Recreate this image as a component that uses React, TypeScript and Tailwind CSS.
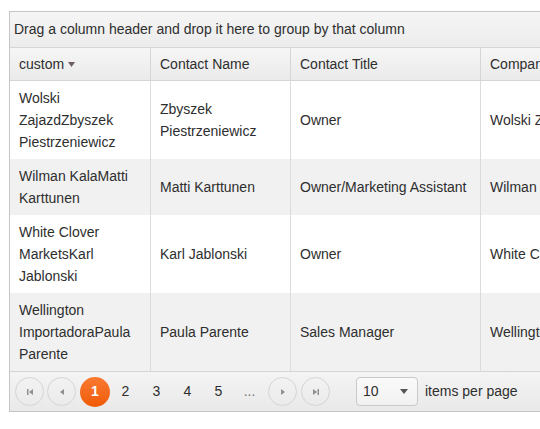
import React from "react";

const rows = [
  ["Wolski ZajazdZbyszek Piestrzeniewicz", "Zbyszek Piestrzeniewicz", "Owner", "Wolski Zajazd"],
  ["Wilman KalaMatti Karttunen", "Matti Karttunen", "Owner/Marketing Assistant", "Wilman Kala"],
  ["White Clover MarketsKarl Jablonski", "Karl Jablonski", "Owner", "White Clover Markets"],
  ["Wellington ImportadoraPaula Parente", "Paula Parente", "Sales Manager", "Wellington Importadora"],
];

function NavBtn({ kind }: { kind: "first" | "prev" | "next" | "last" }) {
  return (
    <div className="w-[29px] h-[29px] rounded-full border border-[#d4d4d4] flex items-center justify-center shrink-0">
      <svg width="10" height="10" viewBox="0 0 10 10">
        {kind === "first" && (
          <g fill="#8f8f8f">
            <rect x="2" y="2" width="1.5" height="6" />
            <polygon points="8,2 8,8 4,5" />
          </g>
        )}
        {kind === "prev" && <polygon points="7,2 7,8 3,5" fill="#8f8f8f" />}
        {kind === "next" && <polygon points="3,2 3,8 7,5" fill="#8f8f8f" />}
        {kind === "last" && (
          <g fill="#8f8f8f">
            <polygon points="2,2 2,8 6,5" />
            <rect x="6.5" y="2" width="1.5" height="6" />
          </g>
        )}
      </svg>
    </div>
  );
}

export default function App() {
  return (
    <div
      className="w-[540px] h-[429px] overflow-hidden bg-white text-[14px] text-[#2e2e2e]"
      style={{ fontFamily: '"Liberation Sans", Arial, sans-serif' }}
    >
      <div className="ml-[9px] mt-[11px] w-[640px] border border-[#c5c5c5]">
        {/* group panel */}
        <div className="h-[36px] flex items-center pl-[4px] border-b border-[#d5d5d5] bg-gradient-to-b from-[#f5f5f5] to-[#ececec]">
          Drag a column header and drop it here to group by that column
        </div>
        {/* header */}
        <div className="flex h-[33px] border-b border-[#d5d5d5] bg-gradient-to-b from-[#f6f6f6] to-[#eaeaea]">
          <div className="w-[140px] pl-[9px] flex items-center">
            custom
            <svg width="8" height="6" viewBox="0 0 8 6" className="ml-[4px] mt-[1px]">
              <polygon points="0,0 7,0 3.5,5" fill="#6b5f5f" />
            </svg>
          </div>
          <div className="w-[140px] pl-[9px] flex items-center border-l border-[#d5d5d5]">Contact Name</div>
          <div className="w-[190px] pl-[9px] flex items-center border-l border-[#d5d5d5]">Contact Title</div>
          <div className="w-[168px] pl-[9px] flex items-center border-l border-[#d5d5d5] whitespace-nowrap">Company Name</div>
        </div>
        {/* rows */}
        {rows.map((r, i) => (
          <div key={i} className={`flex leading-[22px] ${i % 2 === 1 ? "bg-[#f1f1f1]" : "bg-white"}`}>
            <div className="w-[140px] px-[9px] py-[6px] flex items-center">{r[0]}</div>
            <div className="w-[140px] px-[9px] py-[6px] flex items-center border-l border-[#dbdbdb]">{r[1]}</div>
            <div className="w-[190px] px-[9px] py-[6px] flex items-center border-l border-[#dbdbdb]">{r[2]}</div>
            <div className="w-[168px] px-[9px] py-[6px] flex items-center border-l border-[#dbdbdb] whitespace-nowrap">{r[3]}</div>
          </div>
        ))}
        {/* pager */}
        <div className="h-[40px] border-t border-[#d5d5d5] bg-gradient-to-b from-[#f4f4f4] to-[#e9e9e9] flex items-center pl-[5px]">
          <NavBtn kind="first" />
          <div className="ml-[3px]">
            <NavBtn kind="prev" />
          </div>
          <div className="ml-[4px] w-[30px] h-[30px] rounded-full bg-gradient-to-b from-[#f87a30] to-[#f05a00] text-white font-bold flex items-center justify-center">
            1
          </div>
          {["2", "3", "4", "5", "..."].map((n) => (
            <div key={n} className={`w-[31px] text-center ${n === "..." ? "text-[#777]" : ""}`}>
              {n}
            </div>
          ))}
          <div className="ml-[3px]">
            <NavBtn kind="next" />
          </div>
          <div className="ml-[4px]">
            <NavBtn kind="last" />
          </div>
          <div className="ml-[26px] w-[62px] h-[29px] rounded-[4px] border border-[#c9c9c9] bg-gradient-to-b from-[#fafafa] to-[#f1f1f1] flex items-center justify-between pl-[6px] pr-[8px]">
            <span>10</span>
            <svg width="9" height="6" viewBox="0 0 9 6">
              <polygon points="0,0 8,0 4,5" fill="#555" />
            </svg>
          </div>
          <div className="ml-[7px]">items per page</div>
        </div>
      </div>
    </div>
  );
}
